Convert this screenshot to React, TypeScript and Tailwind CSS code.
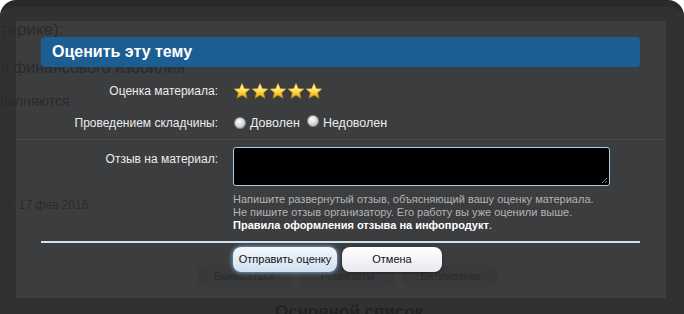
import { useId } from 'react'

function Star() {
  const id = useId()
  return (
    <svg width="18" height="18" viewBox="0 0 24 24">
      <defs>
        <linearGradient id={id} x1="0" y1="0" x2="0" y2="1">
          <stop offset="0" stopColor="#fffbd0" />
          <stop offset="0.45" stopColor="#ffe46a" />
          <stop offset="1" stopColor="#e9a400" />
        </linearGradient>
      </defs>
      <path
        d="M12 1.5l3.1 7.1 7.6.6-5.8 5 1.8 7.5L12 17.7l-6.7 4 1.8-7.5-5.8-5 7.6-.6z"
        fill={`url(#${id})`}
        stroke="#b98400"
        strokeWidth="0.8"
        strokeLinejoin="round"
      />
    </svg>
  )
}

function Radio() {
  return (
    <span className="inline-block w-[12px] h-[12px] rounded-full bg-[radial-gradient(circle_at_40%_35%,#ffffff,#d6d6d6_55%,#9c9c9c)] border border-[#8a8a8a]" />
  )
}

export default function App() {
  return (
    <div className="w-[684px] h-[314px] bg-white overflow-hidden font-['Liberation_Sans',Arial,sans-serif]">
      <div className="relative h-[330px] rounded-[16px] bg-[#303132] border-t-[7px] border-[#2a2a2b]">
        {/* dimmed page behind the dialog */}
        <div className="ml-[16px] mr-[18px] mt-[14px] h-[277px] bg-[#3c3d3f] flex flex-col">
          <div className="-ml-[16px] text-[17px] leading-[18px] text-[#2a2a2b] whitespace-nowrap">терике):</div>
          <div className="-ml-[16px] mt-[20px] text-[16px] leading-[18px] text-[#2a2a2b] whitespace-nowrap">я финансового изобилия</div>
          <div className="-ml-[16px] mt-[15px] text-[14px] leading-[18px] text-[#2a2a2b] whitespace-nowrap">полняются</div>
          <div className="mt-[29px] h-px bg-[#47484a]" />
          <div className="-ml-[16px] mt-[58px] text-[12px] leading-[14px] text-[#2c2c2d] whitespace-nowrap">та, 17 фев 2016.</div>
          <div className="mt-[40px] h-px bg-[#37383a]" />
          <div className="mt-[12px] ml-[181px] flex gap-[8px]">
            {['Выписаться', 'Реквизиты', 'Библиотека'].map(t => (
              <div key={t} className="w-[95px] h-[22px] rounded-[8px] bg-[#38393b] flex items-center justify-center text-[11px] text-[#2b2b2c]">
                {t}
              </div>
            ))}
          </div>
        </div>
        <div className="ml-[275px] mt-[5px] text-[17px] font-bold leading-[18px] text-[#222223] whitespace-nowrap">Основной список</div>

        {/* dialog */}
        <div className="absolute left-[41px] top-[30px] w-[599px] text-[12px] text-[#ececec]">
          <div className="h-[30px] rounded-[4px] bg-[#1b5e93] px-[11px] flex items-center text-[16px] font-bold text-white">
            Оценить эту тему
          </div>

          <div className="mt-[15px] flex items-center h-[18px]">
            <div className="w-[177px] text-right">Оценка материала:</div>
            <div className="ml-[15px] flex">
              <Star /><Star /><Star /><Star /><Star />
            </div>
          </div>

          <div className="mt-[15px] flex items-center h-[16px]">
            <div className="w-[177px] text-right">Проведением складчины:</div>
            <div className="ml-[16px] flex items-center">
              <Radio />
              <span className="ml-[4px] text-[12.5px]">Доволен</span>
              <span className="ml-[7px]"><Radio /></span>
              <span className="ml-[4px] text-[12.5px]">Недоволен</span>
            </div>
          </div>

          <div className="mt-[16px] flex">
            <div className="w-[177px] text-right pt-[3px]">Отзыв на материал:</div>
            <div className="ml-[15px] flex flex-col">
              <div className="relative w-[377px] h-[39px] rounded-[3px] bg-black border border-[#a9cbe6]">
                <svg className="absolute right-[1px] bottom-[1px]" width="7" height="7" viewBox="0 0 7 7">
                  <path d="M6 1L1 6M6 4L4 6" stroke="#888" strokeWidth="1" />
                </svg>
              </div>
              <div className="mt-[7px] text-[11px] leading-[13px] text-[#b4b4b4]">
                <div>Напишите развернутый отзыв, объясняющий вашу оценку материала.</div>
                <div>Не пишите отзыв организатору. Его работу вы уже оценили выше.</div>
                <div className="text-white"><b>Правила оформления отзыва на инфопродукт</b>.</div>
              </div>
            </div>
          </div>

          <div className="mt-[9px] h-[2px] bg-[#cfe2f1]" />

          <div className="mt-[4px] ml-[192px] flex gap-[5px]">
            <div className="w-[104px] h-[25px] rounded-[8px] bg-[linear-gradient(#f4f8fc,#cfe0f1)] shadow-[0_0_5px_#8fc0ea] flex items-center justify-center text-[11px] text-[#111]">
              Отправить оценку
            </div>
            <div className="w-[100px] h-[25px] rounded-[8px] bg-[linear-gradient(#ffffff,#e9e8f0)] shadow-[0_1px_3px_rgba(0,0,0,0.4)] flex items-center justify-center text-[11px] text-[#111]">
              Отмена
            </div>
          </div>
        </div>
      </div>
    </div>
  )
}
